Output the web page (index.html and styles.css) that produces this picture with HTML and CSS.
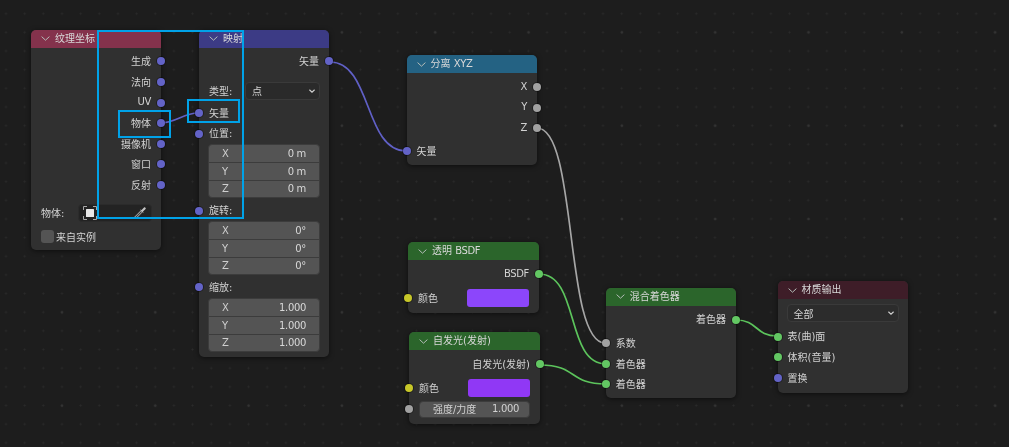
FILE: index.html
```html
<!DOCTYPE html>
<html lang="en">
<head>
  <meta charset="UTF-8">
  <title>Shader nodes</title>
  <link rel="stylesheet" href="styles.css">
</head>
<body>

  <svg width="0" height="0" class="defs">
    <symbol id="chev" viewBox="0 0 9 5">
      <path d="M0.6 0.6 L4.5 4.2 L8.4 0.6" fill="none" stroke="currentColor"/>
    </symbol>
  </svg>

  <div id="editor">

    <!-- Wires -->
    <svg class="wires" width="1009" height="447">
      <path class="w-vec" d="M161 123 C 175 123, 184 113, 198 113"/>
      <path class="w-vec" d="M330 62 C 372 62, 364 151, 406 151"/>
      <path class="w-val" d="M537 128 C 578 128, 564 343, 605 343"/>
      <path class="w-shd" d="M539 274 C 580 274, 565 364, 606 364"/>
      <path class="w-shd" d="M540 365 C 578 365, 568 384, 606 384"/>
      <path class="w-shd" d="M736 320 C 758 320, 755 336, 777 336"/>
    </svg>

    <!-- Texture coordinate -->
    <div class="node n-coord">
      <div class="head h-input"><svg class="chev"><use href="#chev"/></svg>纹理坐标</div>
      <div class="body pt3">
        <div class="row out"><span>生成</span><i class="sock vec"></i></div>
        <div class="row out"><span>法向</span><i class="sock vec"></i></div>
        <div class="row out"><span class="lat">UV</span><i class="sock vec"></i></div>
        <div class="row out"><span>物体</span><i class="sock vec"></i></div>
        <div class="row out"><span>摄像机</span><i class="sock vec"></i></div>
        <div class="row out"><span>窗口</span><i class="sock vec"></i></div>
        <div class="row out"><span>反射</span><i class="sock vec"></i></div>
        <div class="objrow">
          <span>物体:</span>
          <div class="objfield">
            <svg width="14" height="14" viewBox="0 0 14 14">
              <path d="M0.5 4 V0.5 H4 M10 0.5 H13.5 V4 M13.5 10 V13.5 H10 M4 13.5 H0.5 V10" fill="none" stroke="#a8a8a8" stroke-width="1"/>
              <rect x="3" y="3" width="8" height="8" rx="0.5" fill="#e8e8e8"/>
            </svg>
            <svg width="13" height="13" viewBox="0 0 13 13">
              <path d="M1.2 11.8 L7.6 5.4" stroke="#b8b8b8" stroke-width="2.6" fill="none"/>
              <path d="M1.4 11.6 L7.4 5.6" stroke="#3a3a3a" stroke-width="1.2" fill="none"/>
              <path d="M5.8 3.4 L7.6 4 L10 1.4 C10.9 0.6 12.4 2.1 11.6 3 L9 5.4 L9.6 7.2 Z" fill="#c4c4c4"/>
            </svg>
          </div>
        </div>
        <div class="checkrow"><i class="check"></i><span>来自实例</span></div>
      </div>
    </div>

    <!-- Mapping -->
    <div class="node n-map">
      <div class="head h-vector"><svg class="chev"><use href="#chev"/></svg>映射</div>
      <div class="body pt3">
        <div class="row out"><span>矢量</span><i class="sock vec"></i></div>
        <div class="typerow">
          <span>类型:</span>
          <div class="select short">点<svg class="selchev"><use href="#chev"/></svg></div>
        </div>
        <div class="row in"><i class="sock vec"></i><span>矢量</span></div>
        <div class="row in"><i class="sock vec"></i><span>位置:</span></div>
        <div class="group">
          <div class="cell"><span class="axis">X</span><span>0 m</span></div>
          <div class="cell"><span class="axis">Y</span><span>0 m</span></div>
          <div class="cell"><span class="axis">Z</span><span>0 m</span></div>
        </div>
        <div class="row in gap-a"><i class="sock vec"></i><span>旋转:</span></div>
        <div class="group">
          <div class="cell"><span class="axis">X</span><span>0°</span></div>
          <div class="cell"><span class="axis">Y</span><span>0°</span></div>
          <div class="cell"><span class="axis">Z</span><span>0°</span></div>
        </div>
        <div class="row in gap-b"><i class="sock vec"></i><span>缩放:</span></div>
        <div class="group">
          <div class="cell"><span class="axis">X</span><span>1.000</span></div>
          <div class="cell"><span class="axis">Y</span><span>1.000</span></div>
          <div class="cell"><span class="axis">Z</span><span>1.000</span></div>
        </div>
      </div>
    </div>

    <!-- Separate XYZ -->
    <div class="node n-sep">
      <div class="head h-conv"><svg class="chev"><use href="#chev"/></svg><span>分离 <span class="lat">XYZ</span></span></div>
      <div class="body pt3">
        <div class="row out"><span class="lat">X</span><i class="sock val"></i></div>
        <div class="row out"><span class="lat">Y</span><i class="sock val"></i></div>
        <div class="row out"><span class="lat">Z</span><i class="sock val"></i></div>
        <div class="row in gap-c"><i class="sock vec"></i><span>矢量</span></div>
      </div>
    </div>

    <!-- Transparent BSDF -->
    <div class="node n-trans">
      <div class="head h-shader"><svg class="chev"><use href="#chev"/></svg><span>透明 <span class="lat">BSDF</span></span></div>
      <div class="body pt3">
        <div class="row out"><span class="lat">BSDF</span><i class="sock shd"></i></div>
        <div class="row in color"><i class="sock col"></i><span>颜色</span><div class="swatch s1"></div></div>
      </div>
    </div>

    <!-- Emission -->
    <div class="node n-emit">
      <div class="head h-shader"><svg class="chev"><use href="#chev"/></svg>自发光(发射)</div>
      <div class="body pt3">
        <div class="row out"><span>自发光(发射)</span><i class="sock shd"></i></div>
        <div class="row in color"><i class="sock col"></i><span>颜色</span><div class="swatch s2"></div></div>
        <div class="row in strength">
          <i class="sock val"></i>
          <div class="slider"><span>强度/力度</span><span class="lat">1.000</span></div>
        </div>
      </div>
    </div>

    <!-- Mix shader -->
    <div class="node n-mix">
      <div class="head h-shader"><svg class="chev"><use href="#chev"/></svg>混合着色器</div>
      <div class="body pt3">
        <div class="row out"><span>着色器</span><i class="sock shd"></i></div>
        <div class="row in mix-first"><i class="sock val"></i><span>系数</span></div>
        <div class="row in"><i class="sock shd"></i><span>着色器</span></div>
        <div class="row in"><i class="sock shd"></i><span>着色器</span></div>
      </div>
    </div>

    <!-- Material output -->
    <div class="node n-out">
      <div class="head h-output"><svg class="chev"><use href="#chev"/></svg>材质输出</div>
      <div class="body">
        <div class="select wide">全部<svg class="selchev"><use href="#chev"/></svg></div>
        <div class="row in"><i class="sock shd"></i><span>表(曲)面</span></div>
        <div class="row in"><i class="sock shd"></i><span>体积(音量)</span></div>
        <div class="row in"><i class="sock vec"></i><span>置换</span></div>
      </div>
    </div>

    <!-- Highlight frames drawn over the screenshot -->
    <div class="mark m-big"></div>
    <div class="mark m-obj"></div>
    <div class="mark m-vec"></div>

  </div>

</body>
</html>
```

FILE: styles.css
```css
/* Global */
* { box-sizing: border-box; }
html, body {
  margin: 0;
  height: 100%;
  overflow: hidden;
}
body {
  background: #1d1d1d;
  font-family: "DejaVu Sans", "Noto Sans CJK SC", sans-serif;
  font-size: 10px;
  color: #d2d2d2;
}
.defs { position: absolute; }
.lat { letter-spacing: -0.35px; }

/* Node editor canvas: small dots plus a bigger one every fifth */
#editor {
  position: relative;
  width: 1009px;
  height: 447px;
  background-color: #1d1d1d;
  background-image:
    radial-gradient(circle at center, #333 1.4px, transparent 1.6px),
    radial-gradient(circle at center, #2a2a2a 0.9px, transparent 1.1px);
  background-size: 93.33px 93.33px, 18.667px 18.667px;
  background-position: 15.3px -14.3px, -3.33px 4.4px;
  filter: blur(0.3px);
}
.wires {
  position: absolute;
  left: 0;
  top: 0;
  fill: none;
  stroke-width: 1.7;
}
.w-vec { stroke: #6060c6; }
.w-val { stroke: #a6a6a6; }
.w-shd { stroke: #5cc45c; }

/* Nodes sit at free spots on the canvas */
.node {
  position: absolute;
  width: 130px;
  background: #303030;
  border-radius: 5px;
  box-shadow: 0 1px 5px rgba(0,0,0,0.55);
}
.n-coord { left: 31px;    top: 29.5px; height: 220.5px; }
.n-map   { left: 199px;   top: 29.5px; height: 327.5px; }
.n-sep   { left: 406.5px; top: 55px;   height: 110px; width: 130.5px; }
.n-trans { left: 408px;   top: 242px;  height: 71px;  width: 131px; }
.n-emit  { left: 409px;   top: 332px;  height: 92px;  width: 131px; }
.n-mix   { left: 605.7px; top: 287.7px; height: 110.6px; width: 130.3px; }
.n-out   { left: 777.5px; top: 281px;  height: 112px; width: 130.8px; }

.head {
  display: flex;
  align-items: center;
  gap: 5px;
  height: 18.3px;
  padding-left: 10px;
  padding-bottom: 3px;
  border-radius: 5px 5px 0 0;
  color: #d8d8d8;
}
.h-input  { background: #84324c; }
.h-vector { background: #3c3b85; }
.h-conv   { background: #246283; }
.h-shader { background: #2b652b; }
.h-output { background: #3e1d28; }

.chev {
  width: 9px;
  height: 5px;
  margin-top: 3px;
  color: #b4bcb8;
  stroke-width: 1;
}

.body { padding: 0 9px; }
.pt3 { padding-top: 3.4px; }

/* Socket rows */
.row {
  position: relative;
  display: flex;
  align-items: center;
  height: 20.6px;
  padding: 0 1px 1.5px;
}
.row.out { justify-content: flex-end; }
.sock {
  position: absolute;
  top: 50%;
  width: 8px;
  height: 8px;
  margin-top: -4px;
  border-radius: 50%;
  box-shadow: 0 0 0 1px rgba(0,0,0,0.35);
}
.row.out .sock { right: -13px; }
.row.in .sock { left: -13px; }
.vec { background: #6363c7; }
.val { background: #a1a1a1; }
.shd { background: #63c763; }
.col { background: #c7c729; }

/* Texture coordinate extras */
.objrow {
  display: flex;
  align-items: center;
  justify-content: space-between;
  height: 18px;
  margin-top: 8.6px;
  padding-left: 1px;
}
.objfield {
  display: flex;
  align-items: center;
  justify-content: space-between;
  width: 74px;
  height: 18px;
  padding: 0 4px;
  background: #232323;
  border: 1px solid #2b2b2b;
  border-radius: 4px;
}
.checkrow {
  display: flex;
  align-items: center;
  gap: 2px;
  height: 13px;
  margin-top: 8px;
  margin-left: 1px;
}
.check {
  width: 13px;
  height: 13px;
  background: #545454;
  border-radius: 3px;
}

/* Dropdowns */
.typerow {
  display: flex;
  align-items: center;
  justify-content: space-between;
  height: 18px;
  margin-top: 10px;
  margin-bottom: 3px;
  padding-left: 1px;
}
.select {
  display: flex;
  align-items: center;
  justify-content: space-between;
  height: 18px;
  padding: 0 4px 0 6px;
  background: #2a2a2a;
  border: 1px solid #3a3a3a;
  border-radius: 4px;
}
.select.short { width: 75px; }
.select.wide { width: 112px; margin-top: 5px; margin-bottom: 4px; background: #2c2c2c; }
.selchev {
  width: 6px;
  height: 4px;
  color: #d0d0d0;
  stroke-width: 1.7;
}

/* XYZ number groups */
.group {
  width: 112px;
  background: #545454;
  border-radius: 4px;
  overflow: hidden;
  border: 1px solid #3c3c3c;
}
.cell {
  display: flex;
  justify-content: space-between;
  align-items: center;
  height: 18px;
  padding: 0 13px;
  border-top: 1px solid #3c3c3c;
  letter-spacing: -0.35px;
  color: #d8d8d8;
}
.cell:first-child { border-top: 0; height: 17px; }
.cell:last-child { height: 17px; }
.axis { color: #cfcfcf; }
.gap-a { margin-top: 2.3px; }
.gap-b { margin-top: 2.1px; }

/* Separate XYZ */
.gap-c { margin-top: 2.2px; }

/* Colour rows */
.color { justify-content: space-between; height: 23px; margin-top: 2px; padding-bottom: 0; }
.color span { margin-bottom: 1.5px; }
.swatch {
  width: 62px;
  height: 18px;
  border-radius: 3px;
}
.s1 { background: #8c46fb; }
.s2 { background: #9038f5; }

/* Strength slider */
.strength { height: 18px; margin-top: 1px; padding: 0 0 0 1px; }
.strength .sock { margin-top: -4px; }
.slider {
  display: flex;
  justify-content: space-between;
  align-items: center;
  width: 111px;
  height: 17.5px;
  padding: 0 10px 1px 13px;
  background: #545454;
  border: 1px solid #3c3c3c;
  border-radius: 4px;
}

.mix-first { margin-top: 3px; }

/* Blue highlight frames */
.mark {
  position: absolute;
  border: 2px solid #00a2e8;
}
.m-big { left: 97.3px;  top: 30px;  width: 147px; height: 189px; }
.m-obj { left: 118.3px; top: 110px; width: 52.5px; height: 27.7px; }
.m-vec { left: 187.3px; top: 99.3px; width: 52.7px; height: 24px; }
```
